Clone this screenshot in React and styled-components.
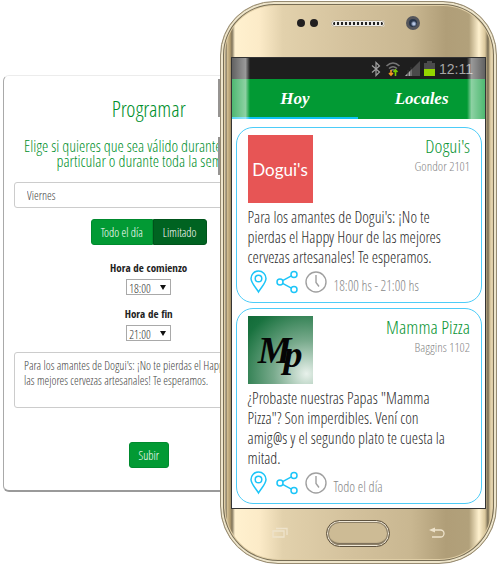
import React from "react";
import styled, { createGlobalStyle } from "styled-components";

const narrow = `"Open Sans Condensed Light", "Open Sans Condensed", "Liberation Sans Narrow", "Liberation Sans", sans-serif`;
const narrowBold = `"Open Sans Condensed", "Liberation Sans Narrow", "Liberation Sans", sans-serif`;

const GlobalStyle = createGlobalStyle`
  * { box-sizing: border-box; }
  body { margin: 0; background: #fff; font-family: ${narrow}; font-weight: 300; color: #3a3a3a; }
  h1, h2, h3, p { margin: 0; font-weight: 300; }
  button, select, textarea { font-family: inherit; font-weight: 300; margin: 0; }
`;

const Stage = styled.main`
  display: grid;
  grid-template-columns: 217fr 75fr 203fr;
  align-items: start;
  padding: 1px 1px 1px 3px;
  overflow: hidden;
`;

const Panel = styled.form`
  grid-column: 1 / 3;
  grid-row: 1;
  display: flex;
  flex-direction: column;
  align-items: center;
  margin-top: 74px;
  padding: 21px 10px 22px;
  background: #fff;
  border: 1px solid #a9a9a9;
  border-top-color: #ececec;
  border-bottom: 2px solid #9a9a9a;
  border-radius: 6px;
`;

const Heading = styled.h1`
  font-size: 22px;
  line-height: 22px;
  color: #008f2c;
`;

const Lead = styled.h2`
  margin: 20px 0 13px;
  font-size: 16px;
  line-height: 15px;
  text-align: center;
  white-space: nowrap;
  color: #008f2c;
`;

const Line = styled.span`
  display: block;
`;

const DaySelect = styled.select`
  appearance: none;
  width: 100%;
  height: 26px;
  padding: 0 12px;
  border: 1px solid #ccc;
  border-radius: 3px;
  background: #fff;
  color: #444;
  font-size: 12px;
`;

const ButtonGroup = styled.div`
  display: flex;
  margin: 11px 0 15px;
`;

const Button = styled.button`
  height: 26px;
  padding: 0 8px;
  min-width: ${(p) => p.$min}px;
  border: 1px solid ${(p) => (p.$active ? "#00531b" : "#008a2e")};
  border-radius: ${(p) => p.$radius || "3px"};
  background: ${(p) => (p.$active ? "#006321" : "#029a34")};
  color: #fff;
  font-size: 12px;
  white-space: nowrap;
`;

const Field = styled.div`
  display: flex;
  flex-direction: column;
  align-items: center;
  gap: 3px;
  margin-bottom: 11px;
`;

const FieldLabel = styled.label`
  font-family: ${narrowBold};
  font-size: 11px;
  line-height: 16px;
  font-weight: 700;
  color: #222;
`;

const TimeWrap = styled.div`
  display: grid;
  align-items: center;
  width: 45px;
`;

const TimeSelect = styled.select`
  grid-area: 1 / 1;
  appearance: none;
  height: 16px;
  padding: 0 2px;
  border: 1px solid #a9a9a9;
  border-radius: 0;
  background: #fff;
  color: #333;
  font-size: 12px;
`;

const Caret = styled.span`
  grid-area: 1 / 1;
  justify-self: end;
  margin-right: 5px;
  border: 3px solid transparent;
  border-top: 5px solid #111;
  border-bottom: 0;
  pointer-events: none;
`;

const Message = styled.textarea`
  width: 100%;
  height: 56px;
  margin-bottom: 34px;
  padding: 5px 9px;
  border: 1px solid #ccc;
  border-radius: 3px;
  background: #fff;
  color: #444;
  font-size: 12px;
  line-height: 15px;
  white-space: pre;
  overflow: hidden;
  resize: none;
`;

const Phone = styled.section`
  grid-column: 2 / 4;
  grid-row: 1;
  position: relative;
  padding: 1px 10px 2px;
  border: 1px solid #978b71;
  border-radius: 54px 54px 58px 58px;
  background: linear-gradient(90deg, #bcae8d 0, #f8efd4 4px, #5f5745 5px, #d6c297 6px, #b49e70 9px, #80745a 11px,
    #fff1cf 14px, #fcebc8 38px, #e2d1ac 62px, #d4c29d 128px, #c9b791 190px, #b09e78 225px, #b2a17b 248px,
    #fff1cf 258px, #dac79c 264px, #756a51 267px, #d5c297 269px, #faf0d5 273px, #b2a281 100%);
  box-shadow: inset 0 0 0 2px #eee5cb, inset 0 0 0 3px #776d55, inset 0 0 0 4px #dfcda5;
`;

const SideKey = styled.span`
  position: absolute;
  left: -3px;
  top: ${(p) => p.$top}px;
  width: 2px;
  height: 38px;
  background: #969492;
`;

const TopBezel = styled.div`
  display: grid;
  grid-template-columns: 1fr auto 1fr;
  align-items: center;
  gap: 13px;
  height: 54px;
  padding: 0 66px 14px;
`;

const Sensors = styled.div`
  display: flex;
  justify-content: flex-end;
  gap: 5px;
`;

const Dot = styled.span`
  width: 8px;
  height: 8px;
  border-radius: 50%;
  background: #211f20;
`;

const Speaker = styled.div`
  width: 54px;
  height: 7px;
  border: 2px solid #efeeec;
  border-radius: 4px;
  outline: 1px solid #bbab8b;
  outline-offset: -1px;
  background: repeating-linear-gradient(90deg, #222 0, #222 2px, #e9e6e0 2px, #e9e6e0 4px);
`;

const Camera = styled.span`
  width: 14px;
  height: 14px;
  margin-left: 8px;
  border: 3px solid #55565b;
  border-radius: 50%;
  background: radial-gradient(circle at 60% 60%, #b6c6e4 0, #b6c6e4 1px, #28354a 3px);
`;

const Screen = styled.div`
  border: 1px solid #343434;
  background: #fff;
`;

const ScreenTop = styled.header`
  position: relative;
  &::before, &::after {
    content: "";
    position: absolute;
    top: 0;
    bottom: 0;
    width: 18px;
    pointer-events: none;
  }
  &::before { left: 0; background: linear-gradient(90deg, #ffffff4d, #ffffff8c 75%, #ffffff00); }
  &::after { right: 0; background: linear-gradient(270deg, #ffffff4d, #ffffff8c 75%, #ffffff00); }
`;

const StatusBar = styled.div`
  display: flex;
  align-items: center;
  justify-content: flex-end;
  gap: 4px;
  height: 21px;
  padding-right: 12px;
  background: #1e1e1e;
  color: #a6a6a6;
  font: 14px/20px "Liberation Sans", sans-serif;
`;

const Tabs = styled.nav`
  display: grid;
  grid-template-columns: 1fr 1fr;
  height: 40px;
  background: #029a34;
`;

const Tab = styled.button`
  border: 0;
  border-bottom: 2px solid ${(p) => (p.$active ? "#0fc3f4" : "#029a34")};
  padding: 2px 0 0;
  background: none;
  color: #fff;
  font: italic 700 17px "Liberation Serif", serif;
`;

const Feed = styled.div`
  display: grid;
  grid-template-columns: minmax(0, 1fr);
  gap: 5px;
  padding: 8px 3px 4px 4px;
`;

const Offer = styled.article`
  padding: 7px 11px 8px;
  border: 1px solid #4cccf8;
  border-radius: 17px;
`;

const OfferTop = styled.div`
  display: flex;
  justify-content: space-between;
  margin-bottom: 4px;
`;

const Logo = styled.div`
  display: flex;
  align-items: center;
  justify-content: center;
  width: 65px;
  height: 68px;
  color: ${(p) => (p.$pizza ? "#050505" : "#fff")};
  background: ${(p) =>
    p.$pizza
      ? "radial-gradient(circle at 90% 85%, #e8f1eb 0, #78aa8c 40%, #19723f 85%, #116a38 100%)"
      : "#e75555"};
  font: ${(p) => (p.$pizza ? "italic 700 38px 'Liberation Serif', serif" : "17px Lato, sans-serif")};
`;

const Overlap = styled.span`
  margin: 8px 0 0 -8px;
`;

const Place = styled.div`
  text-align: right;
`;

const PlaceName = styled.h3`
  font-size: 19px;
  line-height: 23px;
  color: #0b9535;
`;

const Address = styled.p`
  font-size: 13px;
  line-height: 16px;
  color: #888;
`;

const Copy = styled.p`
  font-size: 16px;
  line-height: 20px;
  white-space: nowrap;
  color: #2c2c2c;
`;

const Actions = styled.div`
  display: flex;
  align-items: center;
  gap: 7px;
  height: 24px;
  margin-top: 3px;
`;

const IconButton = styled.button`
  display: flex;
  padding: 0;
  border: 0;
  background: none;
`;

const Hours = styled.span`
  padding-top: 8px;
  font-size: 14px;
  line-height: 16px;
  color: #888;
`;

const BottomBezel = styled.div`
  display: grid;
  grid-template-columns: 1fr 65px 1fr;
  align-items: center;
  justify-items: center;
  height: 52px;
  padding: 0 4px 4px;
`;

const HomeButton = styled.button`
  width: 64px;
  height: 27px;
  padding: 2px;
  border: 1px solid #5f533f;
  border-radius: 14px;
  background: #cdbb95;
  box-shadow: inset 0 0 0 1px #efe7d6, inset 0 0 0 2px #8d8068, inset 0 -3px 1px #776b56;
`;

const Bluetooth = () => (
  <svg width="10" height="16" viewBox="0 0 10 16" fill="none" stroke="#a0a0a0" strokeWidth="1.2">
    <path d="M1 4.500 8.500 11 5 14.500V1.500L8.500 5 1 11.500" />
  </svg>
);

const Wifi = () => (
  <svg width="16" height="16" viewBox="0 0 16 16" fill="none" stroke="#777" strokeWidth="1.6">
    <path d="M1.500 5Q8-1 14.500 5M4 7.500q4-3.500 8 0M6 9.500q2-1.500 4 0" />
    <path d="M6 9v5M4 12l2 2 2-2" stroke="#f39a22" />
    <path d="M10.500 15V9M8.500 11l2-2 2 2" stroke="#78c900" />
  </svg>
);

const Signal = () => (
  <svg width="15" height="15" viewBox="0 0 15 15">
    <path d="M0 15 15 0v15z" fill="#4a4a4a" />
    <path d="M0 15 7 8v7z" fill="#aaa" />
    <path d="M3 9v6M6 6v9" stroke="#333" strokeWidth="1" />
  </svg>
);

const Battery = () => (
  <svg width="11" height="15" viewBox="0 0 11 15">
    <path d="M3 0h5v2h3v6H0V2h3z" fill="#4b4b4b" />
    <path d="M0 8h11v7H0z" fill="#94d500" />
  </svg>
);

const Pin = () => (
  <svg width="21" height="24" viewBox="0 0 21 24" fill="none" stroke="#1cc5f8" strokeWidth="1.500">
    <path d="M10.500 22C8 17.500 3 13 3 8.500a7.500 7.500 0 0 1 15 0c0 4.500-5 9-7.500 13.500Z" />
    <circle cx="10.500" cy="8.500" r="3.300" />
  </svg>
);

const Share = () => (
  <svg width="22" height="24" viewBox="0 0 22 24" fill="none" stroke="#1cc5f8" strokeWidth="1.500">
    <circle cx="4" cy="12" r="3" />
    <circle cx="18" cy="4.500" r="3" />
    <circle cx="18" cy="19.500" r="3" />
    <path d="m6.600 10.600 8.800-4.700M6.600 13.400l8.800 4.700" />
  </svg>
);

const Clock = () => (
  <svg width="22" height="24" viewBox="0 0 22 24" fill="none" stroke="#a0a0a0" strokeWidth="1.400">
    <circle cx="11" cy="12" r="10" />
    <path d="M11 5v7.500l3 4" />
  </svg>
);

const Recents = () => (
  <svg width="16" height="12" viewBox="0 0 16 12" fill="none" stroke="#eee3cb" strokeWidth="1.300">
    <path d="M1 4h11v6H1zM4 1.500h11V8" />
  </svg>
);

const Back = () => (
  <svg width="17" height="12" viewBox="0 0 17 12" fill="none" stroke="#eee3cb" strokeWidth="1.300">
    <path d="M5 3h7.500a3.500 3.500 0 0 1 0 7H4" />
    <path d="M7 .5v5L1 3z" fill="#eee3cb" stroke="none" />
  </svg>
);

const offers = [
  {
    name: "Dogui's",
    address: "Gondor 2101",
    lines: ["Para los amantes de Dogui's: ¡No te", "pierdas el Happy Hour de las mejores", "cervezas artesanales! Te esperamos."],
    hours: "18:00 hs - 21:00 hs",
  },
  {
    name: "Mamma Pizza",
    address: "Baggins 1102",
    pizza: true,
    lines: ["¿Probaste nuestras Papas \"Mamma", "Pizza\"? Son imperdibles. Vení con", "amig@s y el segundo plato te cuesta la", "mitad."],
    hours: "Todo el día",
  },
];

function TimeField({ id, label, value }) {
  return (
    <Field>
      <FieldLabel htmlFor={id}>{label}</FieldLabel>
      <TimeWrap>
        <TimeSelect id={id} defaultValue={value}>
          <option>{value}</option>
        </TimeSelect>
        <Caret />
      </TimeWrap>
    </Field>
  );
}

function OfferCard({ offer }) {
  return (
    <Offer>
      <OfferTop>
        <Logo $pizza={offer.pizza}>
          {offer.pizza ? <>M<Overlap>p</Overlap></> : "Dogui's"}
        </Logo>
        <Place>
          <PlaceName>{offer.name}</PlaceName>
          <Address>{offer.address}</Address>
        </Place>
      </OfferTop>
      <Copy>{offer.lines.map((line) => <Line key={line}>{line}</Line>)}</Copy>
      <Actions>
        <IconButton type="button" aria-label="Ubicación"><Pin /></IconButton>
        <IconButton type="button" aria-label="Compartir"><Share /></IconButton>
        <Clock />
        <Hours>{offer.hours}</Hours>
      </Actions>
    </Offer>
  );
}

export default function App() {
  return (
    <>
      <GlobalStyle />
      <Stage>
        <Panel onSubmit={(e) => e.preventDefault()}>
          <Heading>Programar</Heading>
          <Lead>
            <Line>Elige si quieres que sea válido durante un día en</Line>
            <Line>particular o durante toda la semana</Line>
          </Lead>
          <DaySelect aria-label="Día" defaultValue="Viernes">
            <option>Viernes</option>
          </DaySelect>
          <ButtonGroup>
            <Button type="button" $min={62} $radius="3px 0 0 3px">Todo el día</Button>
            <Button type="button" $active $min={54} $radius="0 3px 3px 0">Limitado</Button>
          </ButtonGroup>
          <TimeField id="start" label="Hora de comienzo" value="18:00" />
          <TimeField id="end" label="Hora de fin" value="21:00" />
          <Message
            aria-label="Mensaje"
            defaultValue={"Para los amantes de Dogui's: ¡No te pierdas el Happy Hour de\nlas mejores cervezas artesanales! Te esperamos."}
          />
          <Button type="submit" $min={40}>Subir</Button>
        </Panel>
        <Phone>
          <SideKey $top={77} />
          <SideKey $top={135} />
          <TopBezel>
            <Sensors><Dot /><Dot /></Sensors>
            <Speaker />
            <Camera />
          </TopBezel>
          <Screen>
            <ScreenTop>
              <StatusBar>
                <Bluetooth /><Wifi /><Signal /><Battery />
                <span>12:11</span>
              </StatusBar>
              <Tabs>
                <Tab type="button" $active>Hoy</Tab>
                <Tab type="button">Locales</Tab>
              </Tabs>
            </ScreenTop>
            <Feed>
              {offers.map((offer) => <OfferCard key={offer.name} offer={offer} />)}
            </Feed>
          </Screen>
          <BottomBezel>
            <IconButton type="button" aria-label="Recientes"><Recents /></IconButton>
            <HomeButton type="button" aria-label="Inicio" />
            <IconButton type="button" aria-label="Atrás"><Back /></IconButton>
          </BottomBezel>
        </Phone>
      </Stage>
    </>
  );
}
